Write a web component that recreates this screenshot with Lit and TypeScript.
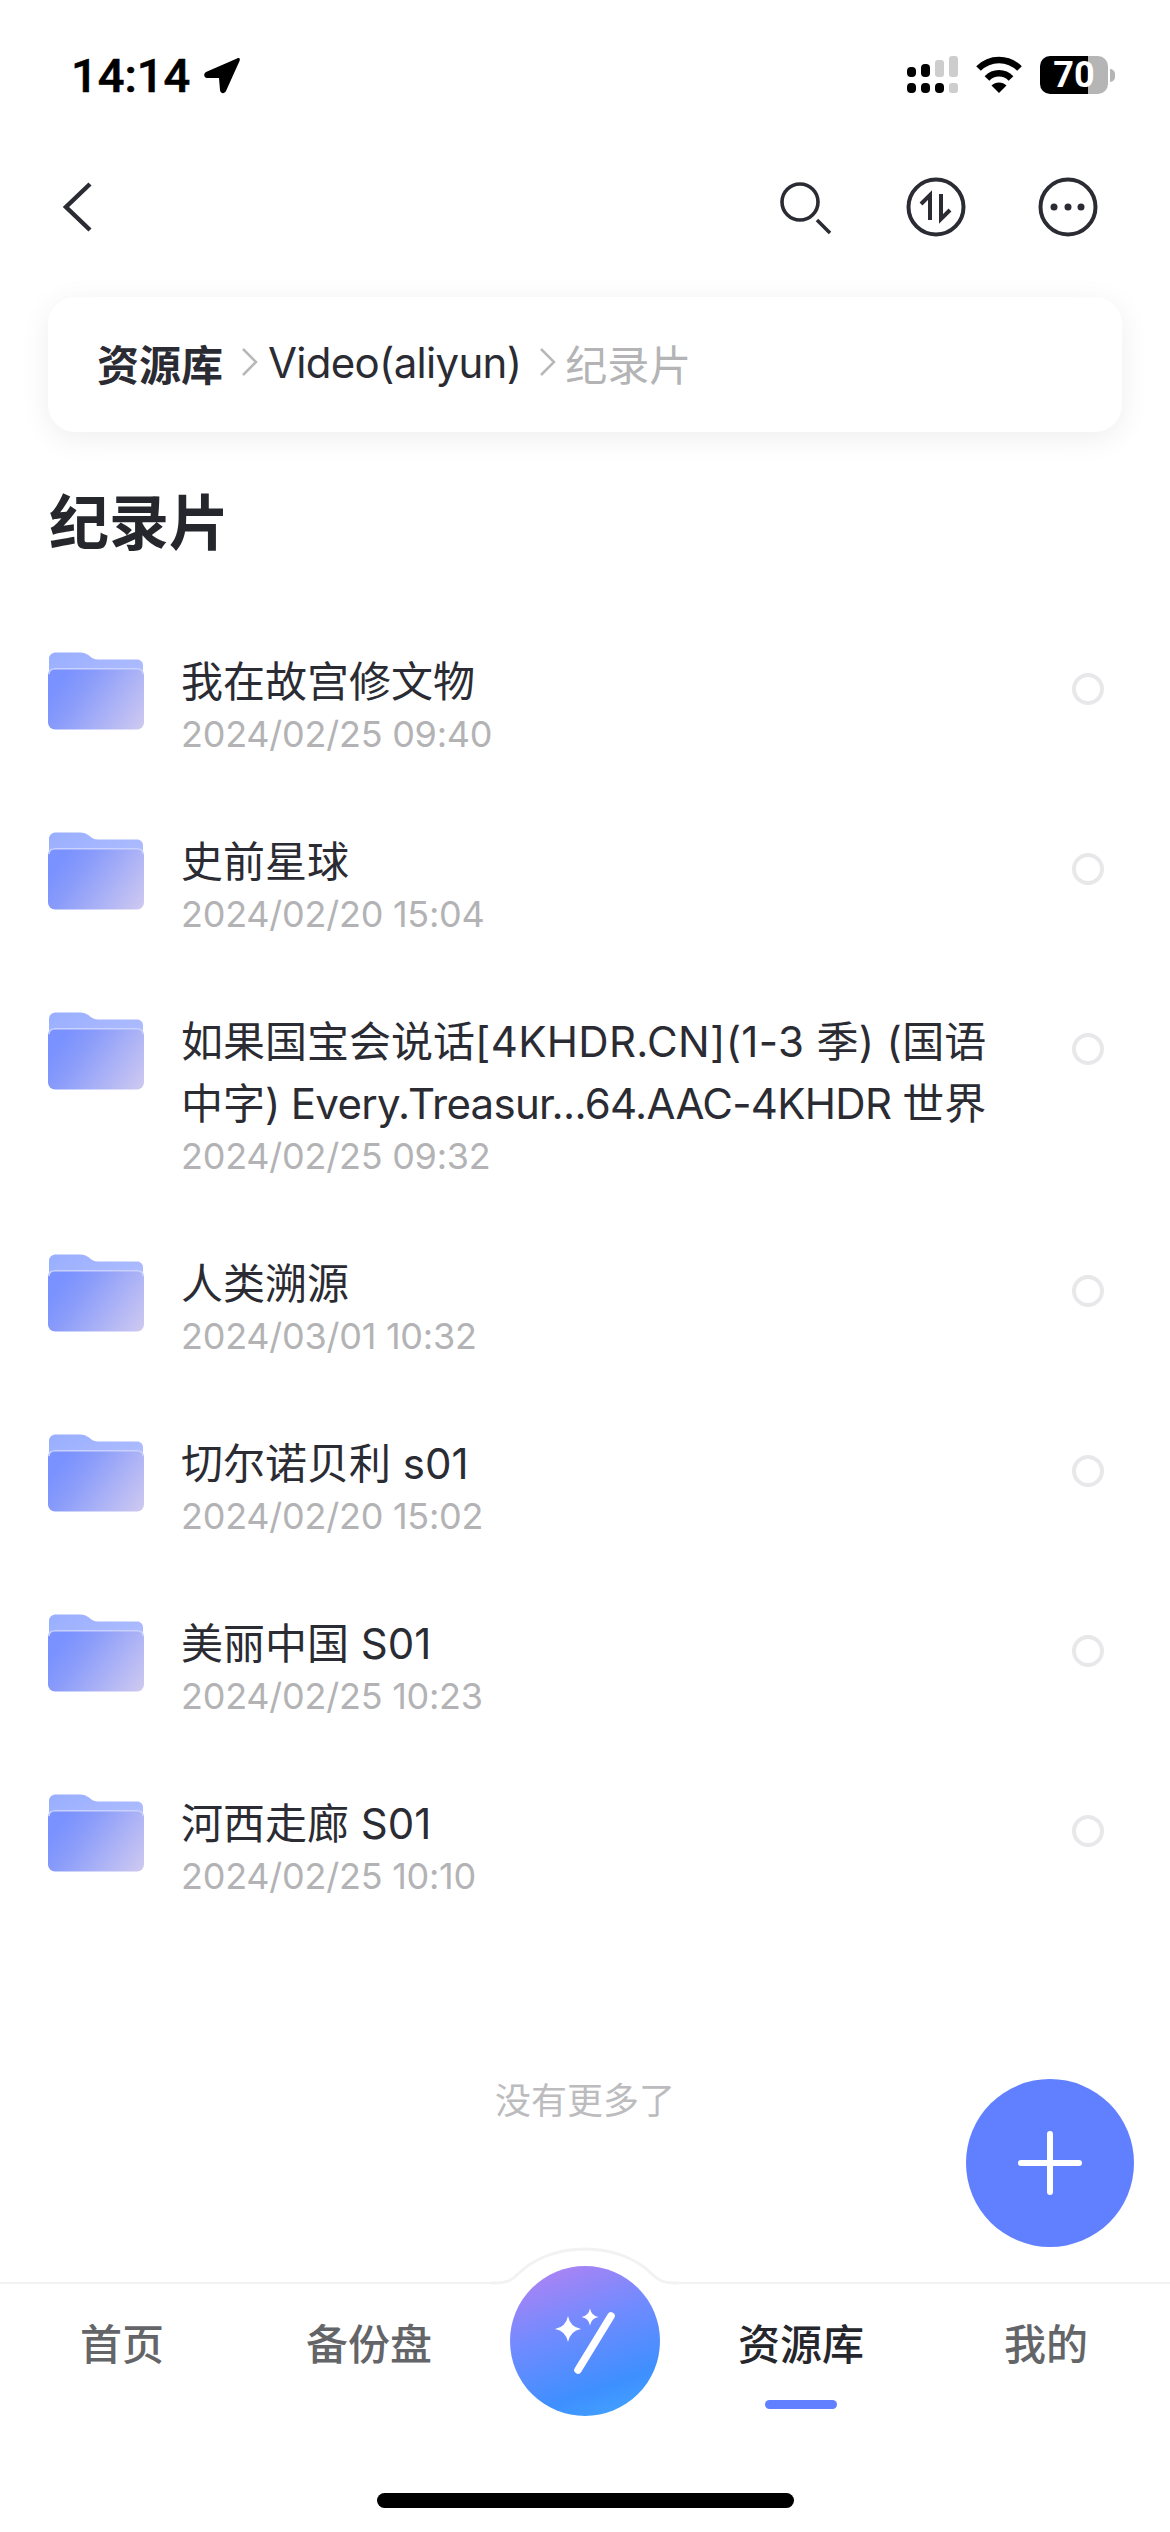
import { LitElement, html, css, svg } from "lit";
import { customElement } from "lit/decorators.js";

const rows: { t: unknown; d: string }[] = [
  { t: "我在故宫修文物", d: "2024/02/25 09:40" },
  { t: "史前星球", d: "2024/02/20 15:04" },
  { t: html`如果国宝会说话<span class="wide">[4KHDR.CN](1-3 季) (</span>国语<br />中字<span class="tight">) Every.Treasur...64.AAC-4KHDR </span>世界`, d: "2024/02/25 09:32" },
  { t: "人类溯源", d: "2024/03/01 10:32" },
  { t: "切尔诺贝利 s01", d: "2024/02/20 15:02" },
  { t: "美丽中国 S01", d: "2024/02/25 10:23" },
  { t: "河西走廊 S01", d: "2024/02/25 10:10" },
];

const star = (x: number, y: number, r: number) => {
  const k = r * 0.16;
  return svg`<path fill="#fff" d="M${x} ${y - r}Q${x + k} ${y - k} ${x + r} ${y}Q${x + k} ${y + k} ${x} ${y + r}Q${x - k} ${y + k} ${x - r} ${y}Q${x - k} ${y - k} ${x} ${y - r}Z"/>`;
};

const folder = (i: number) => html`<svg class="folder" width="96" height="78" viewBox="0 0 96 78">
  <defs>
    <linearGradient id="b${i}" x1="0" y1="0" x2="1" y2="0.6"><stop offset="0" stop-color="#98aeff"/><stop offset="1" stop-color="#aebcff"/></linearGradient>
    <linearGradient id="f${i}" gradientUnits="userSpaceOnUse" x1="16" y1="24" x2="92" y2="78"><stop offset="0" stop-color="#7a92ff"/><stop offset="0.25" stop-color="#8a9cfa"/><stop offset="1" stop-color="#cdc8f1"/></linearGradient>
  </defs>
  <path fill="url(#b${i})" d="M1 7C1 3 4 0.5 8 0.5H32C36 0.5 38 1.5 41 3.5C44 6 46 7.5 50 7.5H89C92.500 7.500 95 10 95 13V30H1Z"/>
  <rect x="0" y="16" width="96" height="61.500" rx="7" fill="url(#f${i})"/>
  <path d="M1 22C1 18.500 3.500 16.700 7 16.700H89C92.500 16.700 95 18.500 95 22" fill="none" stroke="#c9d2ff" stroke-width="1.500"/>
</svg>`;

@customElement("app-root")
export class AppRoot extends LitElement {
  static styles = css`
    :host {
      display: flex;
      flex-direction: column;
      position: relative;
      width: 1170px;
      height: 2532px;
      overflow: hidden;
      background: #fff;
      color: #2b2c33;
      font-family: Inter, "Noto Sans CJK SC", sans-serif;
    }
    svg { display: block; flex: none; }
    .status {
      height: 150px;
      display: flex;
      align-items: center;
      padding: 0 55px 0 71px;
      color: #000;
      box-sizing: border-box;
    }
    .time {
      font: 500 47px/1 Roboto, sans-serif;
      margin-right: 14px;
      -webkit-text-stroke: 0.6px #000;
    }
    .spacer { flex: 1; }
    .signal { margin-right: 17px; }
    .wifi { margin-right: 17px; }
    .battery {
      width: 68px;
      height: 38px;
      border-radius: 10px;
      background: linear-gradient(90deg, #000 71%, #b5b5b5 71%);
      color: #fff;
      font: 700 36px/38px Roboto, sans-serif;
      text-align: center;
    }
    .nub {
      width: 5px;
      height: 13px;
      margin-left: 2px;
      background: #b5b5b5;
      border-radius: 0 6px 6px 0;
    }
    .nav {
      height: 114px;
      display: flex;
      align-items: center;
      padding: 0 70px 0 60px;
      gap: 68px;
    }
    .search { margin-right: 3px; }
    .crumbs {
      height: 135px;
      box-sizing: border-box;
      margin: 33px 48px 0;
      padding: 0 0 5px 49px;
      display: flex;
      align-items: center;
      border-radius: 27px;
      background: #fff;
      box-shadow: 0 6px 30px rgba(0, 0, 0, 0.07);
      font-size: 42px;
    }
    .root { font-weight: 600; }
    .chev { margin: 0 10px 0 19px; }
    .video { letter-spacing: -0.7px; }
    .cur { color: #b4b4b6; }
    .chev2 { margin: 0 9px 0 19px; }
    h1 {
      margin: 51px 0 0 49px;
      font-size: 60px;
      line-height: 80px;
      font-weight: 600;
      color: #26272c;
    }
    .list { margin-top: 89px; }
    .row {
      display: flex;
      align-items: flex-start;
      padding: 0 66px 76px 48px;
      gap: 37px;
    }
    .body { flex: 1; margin-top: -1px; min-width: 0; }
    .name { font-size: 42px; line-height: 62px; white-space: nowrap; }
    .tight { letter-spacing: -0.7px; }
    .wide { letter-spacing: 0.35px; }
    .date { font-size: 36px; line-height: 44px; margin-top: -1px; color: #b3b3b5; letter-spacing: -0.25px; }
    .radio {
      width: 32px;
      height: 32px;
      margin-top: 21px;
      box-sizing: border-box;
      border: 4px solid #e8e8ea;
      border-radius: 50%;
    }
    .end {
      margin-top: 102px;
      text-align: center;
      font-size: 36px;
      line-height: 50px;
      color: #bcbcbe;
    }
    .fab {
      position: absolute;
      left: 966px;
      top: 2079px;
      width: 168px;
      height: 168px;
      border-radius: 50%;
      background: #6180ff;
      display: flex;
      align-items: center;
      justify-content: center;
    }
    .bar {
      position: relative;
      flex: 1;
      display: flex;
      flex-direction: column;
      justify-content: flex-end;
      border-top: 2px solid #f2f2f3;
      margin-top: 156px;
    }
    .bump { position: absolute; left: 485px; top: -37px; }
    .magic {
      position: absolute;
      left: 510px;
      top: -18px;
      width: 150px;
      height: 150px;
      border-radius: 50%;
      background: linear-gradient(160deg, #ab83f4 8%, #6f8bff 42%, #3e8fff 76%, #44a6ff 96%);
    }
    .tabs {
      display: grid;
      grid-template-columns: 244px 250px 182px 250px 240px;
      height: 173px;
      padding-top: 36px;
      box-sizing: content-box;
    }
    .tab {
      display: flex;
      flex-direction: column;
      align-items: center;
      font-size: 42px;
      line-height: 50px;
      font-weight: 500;
      color: #646568;
    }
    .tab.on { color: #26272c; }
    .ind { width: 72px; height: 9px; margin-top: 30px; border-radius: 5px; background: #6180ff; }
    .home {
      width: 417px;
      height: 15px;
      margin: 0 auto 24px;
      border-radius: 8px;
      background: #000;
    }
  `;

  render() {
    return html`
      <div class="status">
        <span class="time">14:14</span>
        <svg width="36" height="37" viewBox="0 0 36 37"><path d="M33 1.500L2 15C-1 17 0 21 3 21L15 21L16 33C16.500 37 20.500 37 22 34L35.500 4C36.500 1.500 35 0.500 33 1.500Z" fill="#000"/></svg>
        <span class="spacer"></span>
        <svg class="signal" width="51" height="38" viewBox="0 0 51 38">
          <rect x="0" y="11" width="9" height="10" rx="4" fill="#000"/>
          <rect x="14" y="8" width="9" height="13" rx="4" fill="#000"/>
          <rect x="28" y="4" width="9" height="17" rx="3" fill="#cdcdcd"/>
          <rect x="42" y="0" width="9" height="21" rx="3" fill="#cdcdcd"/>
          <rect x="0" y="27" width="9" height="10" rx="4" fill="#000"/>
          <rect x="14" y="27" width="9" height="10" rx="4" fill="#000"/>
          <rect x="28" y="27" width="9" height="10" rx="4" fill="#000"/>
          <rect x="42" y="27" width="9" height="10" rx="3" fill="#cdcdcd"/>
        </svg>
        <svg class="wifi" width="48" height="38" viewBox="0 0 48 38">
          <path d="M3.500 12.500C15 1 33 1 44.500 12.500" fill="none" stroke="#000" stroke-width="6.500"/>
          <path d="M12 22.500C18.500 15.500 29.500 15.500 36 22.500" fill="none" stroke="#000" stroke-width="6.500"/>
          <path d="M16.500 29.500C20.500 25.500 27.500 25.500 31.500 29.500L24 37Z" fill="#000"/>
        </svg>
        <div class="battery">70</div>
        <div class="nub"></div>
      </div>

      <div class="nav">
        <svg width="34" height="52" viewBox="0 0 34 52"><path d="M30 3L6 26L30 49" fill="none" stroke="#2b2c33" stroke-width="4.500"/></svg>
        <span class="spacer"></span>
        <svg class="search" width="56" height="56" viewBox="0 0 56 56" fill="none" stroke="#2b2c33" stroke-width="3.600">
          <circle cx="23" cy="23" r="18"/>
          <path d="M40 41L53 54"/>
        </svg>
        <svg width="64" height="64" viewBox="0 0 64 64" fill="none" stroke="#2b2c33" stroke-width="4">
          <circle cx="32" cy="32" r="27.500"/>
          <path d="M26 45V20L17 29"/>
          <path d="M37 19V44L46 35"/>
        </svg>
        <svg width="64" height="64" viewBox="0 0 64 64" fill="none" stroke="#2b2c33" stroke-width="4">
          <circle cx="32" cy="32" r="27.500"/>
          <circle cx="18" cy="32" r="3.500" fill="#2b2c33" stroke="none"/>
          <circle cx="32" cy="32" r="3.500" fill="#2b2c33" stroke="none"/>
          <circle cx="45" cy="32" r="3.500" fill="#2b2c33" stroke="none"/>
        </svg>
      </div>

      <div class="crumbs">
        <span class="root">资源库</span>
        <svg class="chev" width="16" height="28" viewBox="0 0 16 28"><path d="M1 1L14 14L1 27" fill="none" stroke="#b8b8ba" stroke-width="2.500"/></svg>
        <span class="video">Video(aliyun)</span>
        <svg class="chev2" width="16" height="28" viewBox="0 0 16 28"><path d="M1 1L14 14L1 27" fill="none" stroke="#b8b8ba" stroke-width="2.500"/></svg>
        <span class="cur">纪录片</span>
      </div>

      <h1>纪录片</h1>

      <div class="list">
        ${rows.map(
          (r, i) => html`<div class="row">
            ${folder(i)}
            <div class="body">
              <div class="name">${r.t}</div>
              <div class="date">${r.d}</div>
            </div>
            <div class="radio"></div>
          </div>`
        )}
      </div>

      <div class="end">没有更多了</div>

      <div class="fab">
        <svg width="64" height="64" viewBox="0 0 64 64"><path d="M32 3V61M3 32H61" stroke="#fff" stroke-width="6" stroke-linecap="round"/></svg>
      </div>

      <div class="bar">
        <svg class="bump" width="200" height="44" viewBox="0 0 200 44">
          <path fill="#fff" d="M0 44V37H12C22 37 27 33 33 27C50 10 75 3 100 3C125 3 150 10 167 27C173 33 178 37 188 37H200V44Z"/>
          <path fill="none" stroke="#f2f2f3" stroke-width="3" d="M6 36H12C22 36 27 33 33 27C50 10 75 2 100 2C125 2 150 10 167 27C173 33 178 36 188 36H194"/>
        </svg>
        <div class="magic">
          <svg width="150" height="150" viewBox="0 0 150 150">
            ${star(58, 63, 13)}${star(80, 51, 8.5)}
            <path d="M101 50L68 104" stroke="#fff" stroke-width="7.500" stroke-linecap="round"/>
          </svg>
        </div>
        <div class="tabs">
          <div class="tab">首页</div>
          <div class="tab">备份盘</div>
          <div></div>
          <div class="tab on">资源库<div class="ind"></div></div>
          <div class="tab">我的</div>
        </div>
        <div class="home"></div>
      </div>
    `;
  }
}
